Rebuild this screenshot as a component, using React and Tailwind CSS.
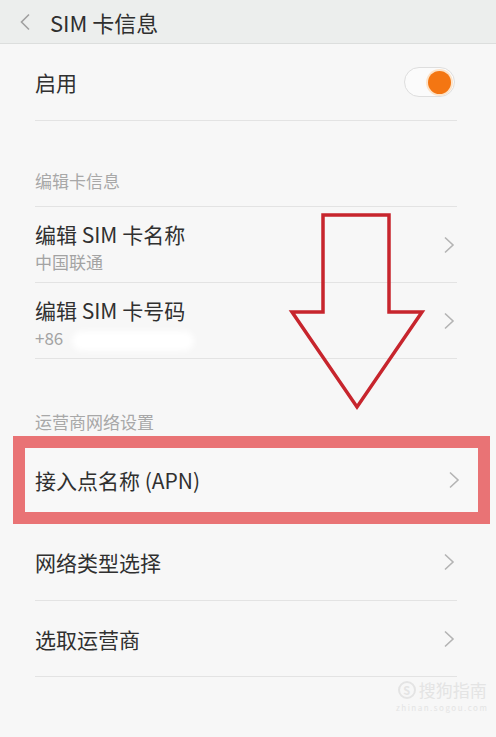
import React from "react";

const Chevron = () => (
  <svg width="12" height="18" viewBox="0 0 12 18" className="shrink-0">
    <path d="M2 1.5 L10 9 L2 16.5" fill="none" stroke="#b4b4b4" strokeWidth="1.6" />
  </svg>
);

const Row = ({ title, sub, right, divider = true, h = "h-[76px]" }) => (
  <div className={`ml-[35px] mr-[39px] flex items-center justify-between ${h} ${divider ? "border-b border-[#e3e3e3]" : ""}`}>
    <div className={`flex flex-col ${sub ? "pt-[4px]" : ""}`}>
      <span className="text-[21px] leading-[30px] text-[#303030]">{title}</span>
      {sub && <span className="text-[17px] leading-[25px] text-[#a3a3a3]">{sub}</span>}
    </div>
    <div className="mr-[2px]">{right || <Chevron />}</div>
  </div>
);

const SectionLabel = ({ children, h }) => (
  <div className={`ml-[35px] mr-[39px] flex items-end pb-[14px] ${h} border-b border-[#e3e3e3]`}>
    <span className="text-[17px] leading-[22px] text-[#a8a8a8]">{children}</span>
  </div>
);

const Toggle = () => (
  <div className="relative w-[51px] h-[30px] rounded-full border border-[#dedede] bg-[#fbfbfb]">
    <div className="absolute right-[3px] top-[3px] w-[23px] h-[23px] rounded-full bg-[#f47612] shadow-[0_0_0_2px_#fde3c8]" />
  </div>
);

export default function App() {
  return (
    <div
      className="relative w-[496px] h-[737px] overflow-hidden bg-[#f7f7f7]"
      style={{ fontFamily: '"Noto Sans CJK SC", "Noto Sans", sans-serif' }}
    >
      <div className="h-[44px] flex items-center bg-[#eceeed] border-b border-[#dcdedd]">
        <svg width="12" height="18" viewBox="0 0 12 18" className="ml-[19px]">
          <path d="M10 1.5 L2.5 9 L10 16.5" fill="none" stroke="#a0a0a0" strokeWidth="1.6" />
        </svg>
        <span className="ml-[19px] text-[22px] leading-[28px] text-[#2f2f2f]">SIM 卡信息</span>
      </div>

      <Row title="启用" right={<Toggle />} h="h-[77px]" />

      <SectionLabel h="h-[86px]">编辑卡信息</SectionLabel>
      <Row title="编辑 SIM 卡名称" sub="中国联通" />
      <Row title="编辑 SIM 卡号码" sub="+86" />

      <div className="mx-[35px] flex items-end pb-[3px] h-[77px]">
        <span className="text-[17px] leading-[22px] text-[#a8a8a8]">运营商网络设置</span>
      </div>

      <div className="ml-[13px] mr-[6px] border-[12px] border-[#e97375] bg-[#f8f8f8]">
        <div className="h-[64px] pl-[10px] pr-[18px] flex items-center justify-between">
          <span className="text-[21px] leading-[28px] text-[#303030]">接入点名称 (APN)</span>
          <Chevron />
        </div>
      </div>

      <Row title="网络类型选择" h="h-[77px]" />
      <Row title="选取运营商" />

      {/* redaction smear over the number */}
      <div className="absolute left-[72px] top-[331px] w-[122px] h-[20px] rounded-full bg-white blur-[3px]" />

      {/* red annotation arrow */}
      <svg className="absolute left-0 top-0" width="496" height="737" viewBox="0 0 496 737">
        <polygon
          points="323,215 389,215 389,312 422,312 357,407 292,312 323,312"
          fill="none"
          stroke="#c7252d"
          strokeWidth="3.5"
          strokeLinejoin="miter"
        />
      </svg>

      {/* watermark */}
      <div className="absolute left-[396px] top-[679px] flex flex-col items-center gap-[2px]">
        <div className="flex items-center gap-[3px]">
          <div className="w-[18px] h-[18px] rounded-full border-2 border-[#e4e4e4] flex items-center justify-center text-[11px] font-bold leading-none text-[#e4e4e4]">S</div>
          <span className="text-[17px] leading-[22px] text-[#e4e4e4]">搜狗指南</span>
        </div>
        <span className="text-[8px] leading-[10px] tracking-[1.5px] text-[#e4e4e4]">zhinan.sogou.com</span>
      </div>
    </div>
  );
}
